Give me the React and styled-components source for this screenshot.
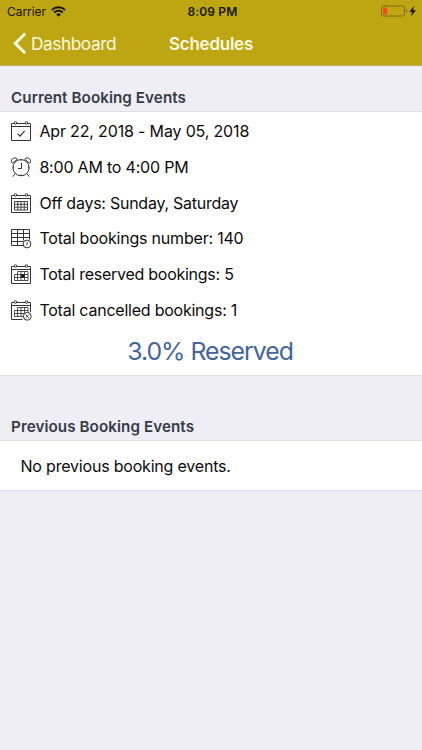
import React from "react";
import styled, { createGlobalStyle } from "styled-components";

const GlobalStyle = createGlobalStyle`
  * { box-sizing: border-box; }
  body { margin: 0; background: #efeef5; font-family: Inter, "Liberation Sans", sans-serif; color: #0b0b0b; }
`;
const Screen = styled.main`
  display: flex;
  flex-direction: column;
  width: 422px;
  height: 750px;
  overflow: hidden;
  background: #efeef5;
`;
const Header = styled.header`
  height: 66px;
  background: #bea512;
  border-bottom: 1px solid #b9ac62;
`;
const StatusBar = styled.div`
  display: grid;
  grid-template-columns: 1fr auto 1fr;
  align-items: center;
  height: 22px;
  padding: 0 5px 0 7px;
  color: #171503;
`;
const Carrier = styled.div`
  display: flex;
  align-items: center;
  gap: 5px;
  font-size: 12px;
  letter-spacing: -0.05px;
`;
const Clock = styled.time`
  padding-left: 1px;
  font-size: 12px;
  font-weight: 600;
  letter-spacing: 0.15px;
`;
const Power = styled.div`
  display: flex;
  justify-content: flex-end;
`;
const NavBar = styled.nav`
  display: grid;
  grid-template-columns: 1fr auto 1fr;
  align-items: center;
  height: 43px;
  color: #fffbe0;
`;
const Back = styled.a`
  display: flex;
  align-items: center;
  gap: 4px;
  padding-left: 13px;
  font-size: 17.3px;
  line-height: 20px;
  letter-spacing: -0.45px;
`;
const Title = styled.h1`
  margin: 0;
  font-size: 17px;
  line-height: 20px;
  font-weight: 600;
  letter-spacing: -0.25px;
`;
const SectionTitle = styled.h2`
  display: flex;
  align-items: flex-end;
  height: ${(p) => p.$height}px;
  margin: 0;
  padding: 0 11px 3px;
  font-size: 15.2px;
  line-height: 20px;
  font-weight: 600;
  letter-spacing: 0.08px;
  color: #343c47;
`;
const Panel = styled.section`
  border-top: 1px solid #dedee4;
  border-bottom: 1px solid #dedee4;
  background: #fff;
`;
const EventPanel = styled(Panel)`
  height: 265px;
  padding-top: 1.4px;
`;
const Row = styled.div`
  display: flex;
  align-items: center;
  gap: 7.4px;
  height: 35.7px;
  padding-left: 10px;
`;
const RowText = styled.span`
  font-size: 16px;
  line-height: 20px;
  white-space: nowrap;
  letter-spacing: ${(p) => p.$tracking}px;
`;
const Reserved = styled.div`
  padding: 4px 2px 0 0;
  font-size: 24.8px;
  line-height: 38px;
  letter-spacing: -1px;
  text-align: center;
  color: #44659b;
`;
const EmptyPanel = styled(Panel)`
  display: flex;
  align-items: center;
  height: 51px;
  padding: 0 0 0 20.5px;
`;
const Icon = styled.svg`
  flex: none;
  display: block;
`;

const Wifi = () => (
  <Icon width="15" height="11" viewBox="0 0 15 11" fill="none" stroke="#171503" strokeWidth="2">
    <path d="M.9 4.1a9.3 9.3 0 0 1 13.2 0M3.3 6.5a6 6 0 0 1 8.4 0" />
    <path d="M7.5 10.8 5.2 8.4a3.3 3.3 0 0 1 4.6 0Z" fill="#171503" stroke="none" />
  </Icon>
);
const Battery = () => (
  <Icon width="37" height="13" viewBox="0 0 37 13" fill="none">
    <rect x="1.5" y="1" width="23" height="10" rx="2" stroke="#7d6d14" />
    <rect x="3" y="2.5" width="4.2" height="7" rx=".6" fill="#f24a28" />
    <path d="M26 4.3q1.3.4 1.3 1.7T26 7.7Z" fill="#7d6d14" />
    <path d="m34.2 .8-4.9 5.9h2.8l-1.2 4.8 5-6.2H33Z" fill="#171503" />
  </Icon>
);
const Chevron = () => (
  <Icon width="14" height="23" viewBox="0 0 14 23" fill="none" stroke="#fffbe0" strokeWidth="3">
    <path d="M12.2 1.5 2.3 11.4l9.9 9.9" />
  </Icon>
);

const CalendarFrame = ({ cut }) => (
  <>
    <path d={cut ? "M12.5 20.5h-11v-17H4M7 3.5h8M18 3.5h2.5V13" : "M4 3.5H1.5v17h19v-17H18M7 3.5h8"} />
    <path d="M1.5 6.5h19" />
    <circle cx="5.5" cy="3" r="1.3" />
    <circle cx="16.5" cy="3" r="1.3" />
  </>
);
const DayGrid = () => (
  <path
    d="M7.5 8.5H18M4.5 11.5H18M4.5 14.5H18M4.5 17.5h10M4.5 11.5v6M7.5 8.5v9M11 8.5v9M14.5 8.5v9M18 8.5v6"
    strokeWidth=".85"
  />
);
const drawings = {
  check: (
    <>
      <CalendarFrame />
      <path d="m7.6 13.6 2.5 2.6 4.5-5.4" strokeWidth="1.15" />
    </>
  ),
  clock: (
    <>
      <circle cx="11" cy="11.7" r="8.1" />
      <path d="M11.5 7v5.5H8M11 3.6v1.3M2.9 11.7h1.3M17.8 11.7h1.3M11 18.3v1.3M5.2 17.6l-2.4 3M16.8 17.6l2.4 3" />
      <path d="M2.2 7.3C.6 5.2 1.5 2.9 3.6 2.2s3.2.2 3.7 1.2ZM19.8 7.3c1.6-2.1.7-4.4-1.4-5.1s-3.2.2-3.7 1.2Z" />
    </>
  ),
  grid: (
    <>
      <CalendarFrame />
      <path d="M4.5 9.5h13v8.5h-13ZM4.5 12.3h13M4.5 15.2h13M7.75 9.5V18M11 9.5V18M14.25 9.5V18" strokeWidth=".9" />
    </>
  ),
  tableClock: (
    <>
      <path d="M13.5 18.5h-12v-16h18v10M1.5 6.5h18M1.5 10.5h18M1.5 14.5h12M7.5 2.5v16M13.5 2.5v11" />
      <circle cx="17" cy="17" r="3.9" fill="#fff" />
      <path d="M17.2 14.8v2.5l-1.6 1.2" strokeWidth=".9" />
    </>
  ),
  reserved: (
    <>
      <CalendarFrame />
      <DayGrid />
      <path d="M14.5 17.5H18v-3" strokeWidth=".85" />
      <path d="M11 11.5h3.5v3H11Z" fill="#111" />
    </>
  ),
  cancelled: (
    <>
      <CalendarFrame cut />
      <DayGrid />
      <circle cx="17.3" cy="17.3" r="3.9" fill="#fff" />
      <path d="m15.7 15.7 3.2 3.2m0-3.2-3.2 3.2" strokeWidth=".9" />
    </>
  ),
};
const rows = [
  { icon: "check", text: "Apr 22, 2018 - May 05, 2018", tracking: -0.16 },
  { icon: "clock", text: "8:00 AM to 4:00 PM", tracking: -0.2 },
  { icon: "grid", text: "Off days: Sunday, Saturday", tracking: -0.25 },
  { icon: "tableClock", text: "Total bookings number: 140", tracking: -0.2 },
  { icon: "reserved", text: "Total reserved bookings: 5", tracking: -0.26 },
  { icon: "cancelled", text: "Total cancelled bookings: 1", tracking: -0.23 },
];

export default function App() {
  return (
    <Screen>
      <GlobalStyle />
      <Header>
        <StatusBar>
          <Carrier>Carrier <Wifi /></Carrier>
          <Clock>8:09 PM</Clock>
          <Power><Battery /></Power>
        </StatusBar>
        <NavBar>
          <Back><Chevron />Dashboard</Back>
          <Title>Schedules</Title>
        </NavBar>
      </Header>
      <SectionTitle $height={45}>Current Booking Events</SectionTitle>
      <EventPanel>
        {rows.map((row) => (
          <Row key={row.icon}>
            <Icon width="22" height="22" viewBox="0 0 22 22" fill="none" stroke="#333" strokeWidth="1">
              {drawings[row.icon]}
            </Icon>
            <RowText $tracking={row.tracking}>{row.text}</RowText>
          </Row>
        ))}
        <Reserved>3.0% Reserved</Reserved>
      </EventPanel>
      <SectionTitle $height={64}>Previous Booking Events</SectionTitle>
      <EmptyPanel><RowText $tracking={-0.2}>No previous booking events.</RowText></EmptyPanel>
    </Screen>
  );
}
